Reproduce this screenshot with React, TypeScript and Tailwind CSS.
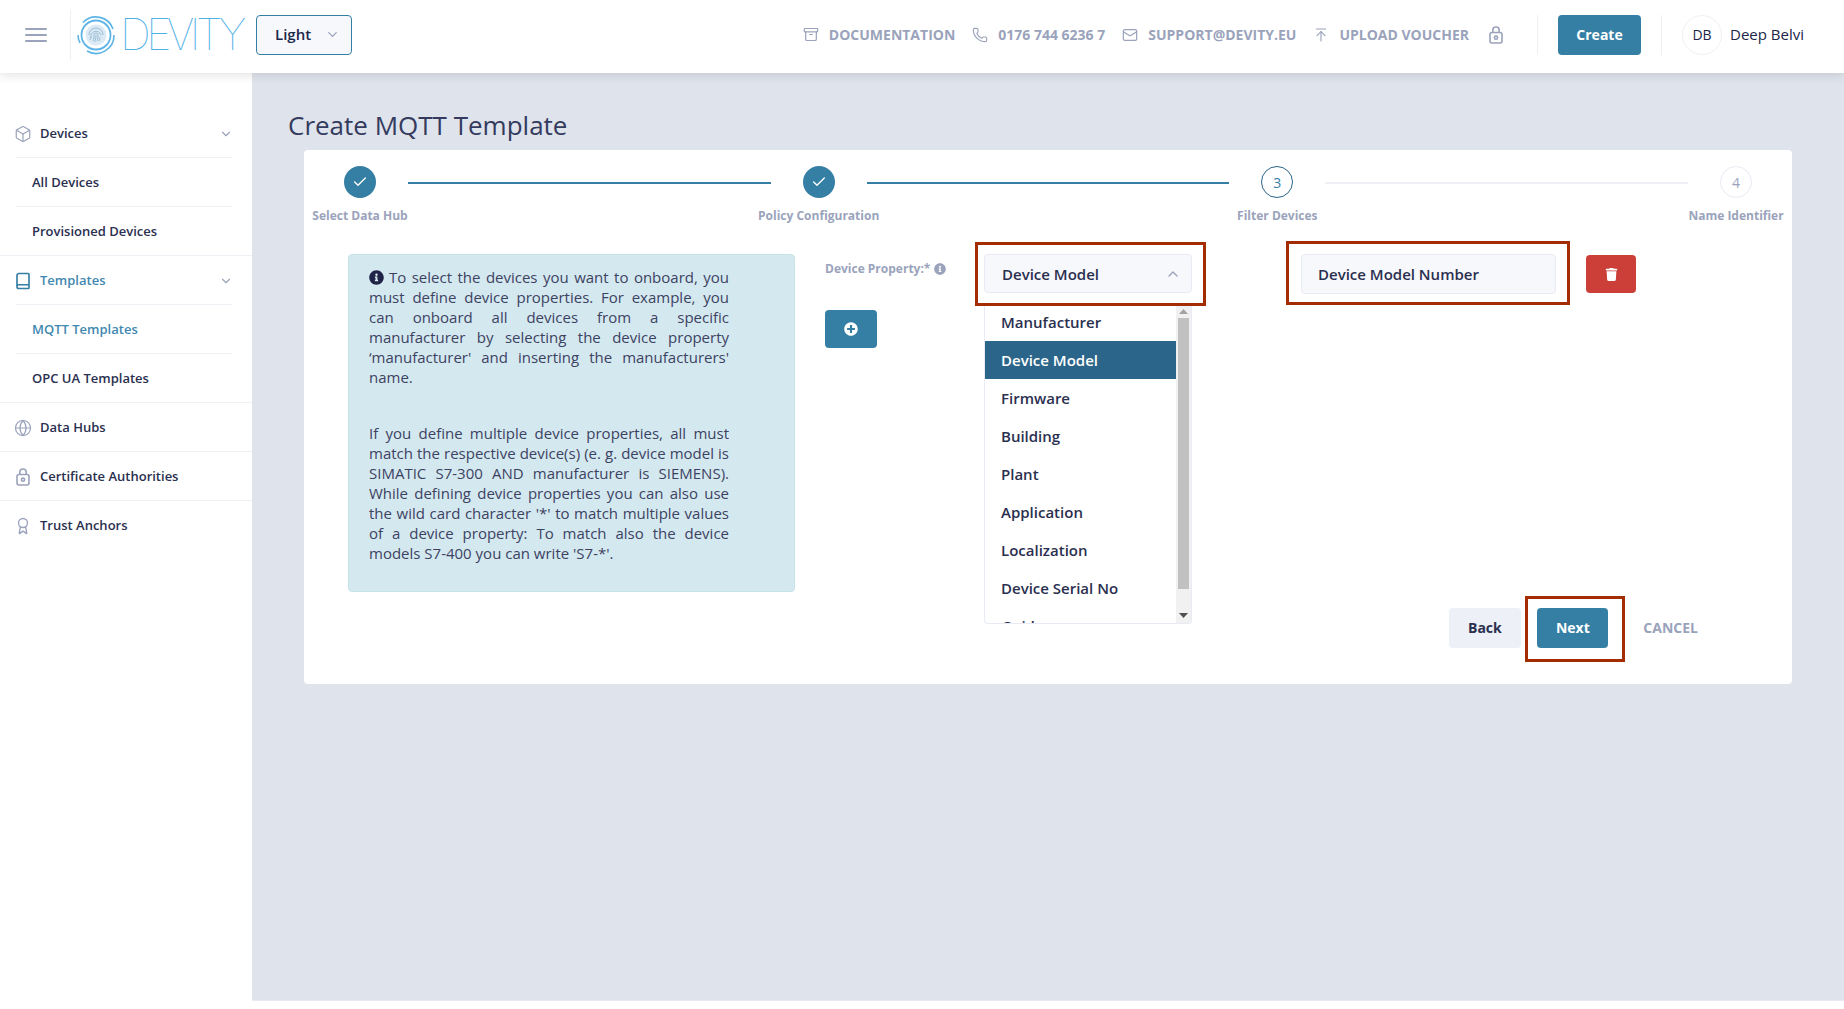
import React from "react";
import { Archive, ArrowUpToLine, Award, Book, Box, Check, ChevronDown, ChevronUp, Globe, Mail, Phone } from "lucide-react";
import { FaInfoCircle, FaPlusCircle, FaTrash } from "react-icons/fa";

function PadLock({ className }: { className?: string }) {
  return (
    <svg width="14" height="18" viewBox="0 0 14 18" fill="none" stroke="currentColor" strokeWidth="1.6" className={className}>
      <rect x="1" y="6.500" width="12" height="10.500" rx="2" />
      <circle cx="7" cy="11.700" r="1.600" />
      <path d="M3.800 6.500V4.200a3.200 3.200 0 0 1 6.400 0v2.300" />
    </svg>
  );
}

function Logo() {
  return (
    <div className="flex items-center ml-[5px] w-[172px] h-[50px]">
      <svg width="40" height="40" viewBox="0 0 40 40" fill="none" className="shrink-0">
        <path d="M7 7.500A18 18 0 0 1 37 14" stroke="#5eb4e6" strokeWidth="1.6" />
        <path d="M38 20A18 18 0 0 1 11 36" stroke="#5eb4e6" strokeWidth="1.6" />
        <path d="M2 20A18 18 0 0 0 4 28" stroke="#5eb4e6" strokeWidth="1.6" />
        <circle cx="20" cy="20" r="14.5" stroke="#5eb4e6" strokeWidth="1.8" />
        <circle cx="20" cy="20" r="10.5" fill="#dbeaf4" />
        <path d="M13 20a7 7 0 0 1 14 0M15 23a5 5 0 0 1 10-3M17 26c1-2 1-4 1-6a2 2 0 0 1 4 0c0 2 0 4-1 6M20 20c0 3-.5 5-1.500 7M24 22c0 2-.5 3-1 4M14 25c.5-1 1-2 1-3" stroke="#8fb7cf" strokeWidth="0.9" />
      </svg>
      <span className="ml-[4px] font-['Inter',sans-serif] font-[120] text-[43px] leading-none tracking-[-4.500px] text-[#4fb0e8]">DEVITY</span>
    </div>
  );
}

function TopLink({ icon, text }: { icon: React.ReactNode; text: string }) {
  return (
    <div className="flex items-center">
      <span className="w-4 flex justify-center mr-[10px] text-[#9aa3bb]">{icon}</span>
      <span className="text-[14px] font-bold text-[#9aa3bb] whitespace-nowrap">{text}</span>
    </div>
  );
}

function Header() {
  return (
    <header className="relative z-10 h-[73px] pb-[4px] bg-white shadow-[0_2px_10px_rgba(0,0,0,0.12)] flex items-center">
      <div className="ml-[25px] w-[22px] flex flex-col gap-[4px]">
        <span className="h-[2px] bg-[#9aa3bb] rounded" />
        <span className="h-[2px] bg-[#9aa3bb] rounded" />
        <span className="h-[2px] bg-[#9aa3bb] rounded" />
      </div>
      <div className="ml-[23px] w-px h-[50px] bg-[#eef0f5]" />
      <Logo />
      <div className="ml-[8px] w-[96px] h-[40px] border border-[#367fa4] rounded bg-[#f7f8fc] flex items-center pl-[18px] pr-[11px] justify-between">
        <span className="text-[15px] font-semibold text-[#20264a]">Light</span>
        <ChevronDown size={15} className="text-[#9aa3bb]" />
      </div>
      <div className="ml-auto flex items-center pr-[40px]">
        <div className="flex items-center gap-[17px]">
          <TopLink icon={<Archive size={17} strokeWidth={1.8} />} text="DOCUMENTATION" />
          <TopLink icon={<Phone size={18} strokeWidth={1.7} />} text="0176 744 6236 7" />
          <TopLink icon={<Mail size={18} strokeWidth={1.8} />} text="SUPPORT@DEVITY.EU" />
          <TopLink icon={<ArrowUpToLine size={18} strokeWidth={1.7} />} text="UPLOAD VOUCHER" />
          <PadLock className="ml-[3px] text-[#9aa3bb]" />
        </div>
        <div className="ml-[34px] w-px h-[40px] bg-[#eef0f5]" />
        <button className="ml-[20px] w-[83px] h-[40px] rounded bg-[#367fa4] text-white text-[14px] font-bold">Create</button>
        <div className="ml-[20px] w-px h-[40px] bg-[#eef0f5]" />
        <div className="ml-[20px] w-[40px] h-[40px] rounded-full border border-[#eef0f5] flex items-center justify-center text-[14px] text-[#20264a]">DB</div>
        <span className="ml-[8px] text-[15px] text-[#20264a] whitespace-nowrap">Deep Belvi</span>
      </div>
    </header>
  );
}

function SideRow({ icon, text, chevron, active, last, sub }: { icon?: React.ReactNode; text: string; chevron?: boolean; active?: boolean; last?: boolean; sub?: boolean }) {
  return (
    <div className={`ml-4 mr-5 pt-px flex items-center ${last ? "h-[48px]" : "h-[49px] border-b border-[#eef0f5]"} ${sub ? "pl-4" : ""}`}>
      {icon && <span className={`-ml-[2px] w-[18px] mr-[8px] flex justify-center ${active ? "text-[#367fa4]" : "text-[#9aa3bb]"}`}>{icon}</span>}
      <span className={`text-[13px] font-semibold whitespace-nowrap ${active ? "text-[#3f88b0]" : "text-[#2a2f4f]"}`}>{text}</span>
      {chevron && <ChevronDown size={14} className="ml-auto -mr-[1px] text-[#9aa3bb]" />}
    </div>
  );
}

function Sidebar() {
  return (
    <aside className="w-[252px] shrink-0 pt-[36px] bg-white">
      <div className="border-b border-[#eef0f5]">
        <SideRow icon={<Box size={18} strokeWidth={1.6} />} text="Devices" chevron />
        <SideRow sub text="All Devices" />
        <SideRow sub text="Provisioned Devices" last />
      </div>
      <div className="border-b border-[#eef0f5]">
        <SideRow active icon={<Book size={18} strokeWidth={2.2} />} text="Templates" chevron />
        <SideRow sub active text="MQTT Templates" />
        <SideRow sub text="OPC UA Templates" last />
      </div>
      <div className="border-b border-[#eef0f5]">
        <SideRow icon={<Globe size={18} strokeWidth={1.6} />} text="Data Hubs" last />
      </div>
      <div className="border-b border-[#eef0f5]">
        <SideRow icon={<PadLock />} text="Certificate Authorities" last />
      </div>
      <SideRow icon={<Award size={18} strokeWidth={1.8} />} text="Trust Anchors" last />
    </aside>
  );
}

function Step({ n, label, state }: { n: number; label: string; state: "done" | "current" | "todo" }) {
  return (
    <div className="w-24 shrink-0 flex flex-col items-center">
      {state === "done" ? (
        <div className="w-8 h-8 rounded-full bg-[#367fa4] flex items-center justify-center text-white">
          <Check size={16} strokeWidth={2} />
        </div>
      ) : (
        <div className={`w-8 h-8 rounded-full border flex items-center justify-center text-[14px] ${state === "current" ? "border-[#2b6589] text-[#367fa4]" : "border-[#e8ebf3] text-[#9aa3bb]"}`}>{n}</div>
      )}
      <span className="mt-[10px] text-[12px] leading-4 font-bold text-[#9aa3bb] whitespace-nowrap">{label}</span>
    </div>
  );
}

function Stepper() {
  return (
    <div className="flex items-start h-[58px]">
      <Step n={1} label="Select Data Hub" state="done" />
      <div className="flex-1 mt-4 h-0.5 bg-[#367fa4]" />
      <Step n={2} label="Policy Configuration" state="done" />
      <div className="flex-1 mt-4 h-0.5 bg-[#367fa4]" />
      <Step n={3} label="Filter Devices" state="current" />
      <div className="flex-1 mt-4 h-0.5 bg-[#eef0f5]" />
      <Step n={4} label="Name Identifier" state="todo" />
    </div>
  );
}

function InfoBox() {
  return (
    <div className="ml-9 w-[447px] h-[338px] shrink-0 rounded border border-[#c7e3ea] bg-[#d4e9ef] pl-[20px] pr-[65px] pt-[12px] text-[15px] leading-5 text-[#3d4263] text-justify">
      <p className="mb-9">
        <FaInfoCircle className="inline-block align-[-2px] mr-[5px] text-[#1f2347]" size={15} />
        To select the devices you want to onboard, you must define device properties. For example, you can onboard all devices from a specific manufacturer by selecting the device property ‘manufacturer' and inserting the manufacturers' name.
      </p>
      <p>
        If you define multiple device properties, all must match the respective device(s) (e. g. device model is SIMATIC S7-300 AND manufacturer is SIEMENS). While defining device properties you can also use the wild card character '*' to match multiple values of a device property: To match also the device models S7-400 you can write 'S7-*'.
      </p>
    </div>
  );
}

const options = ["Manufacturer", "Device Model", "Firmware", "Building", "Plant", "Application", "Localization", "Device Serial No", "Guide"];

function Dropdown() {
  return (
    <div className="absolute left-[6px] top-[calc(100%+3px)] w-[208px] h-[318px] bg-white border-x border-b border-[#e8ebf3] rounded-b flex overflow-hidden">
      <div className="flex-1 -mt-[3px]">
        {options.map((o) => (
          <div key={o} className={`h-[38px] shrink-0 pl-4 flex items-center text-[15px] font-semibold ${o === "Device Model" ? "bg-[#2b6589] text-white" : "text-[#2a2f4f]"}`}>{o}</div>
        ))}
      </div>
      <div className="relative w-[15px] shrink-0 bg-[#f1f1f1] pt-[12px] px-[2px]">
        <svg width="9" height="5" viewBox="0 0 9 5" className="absolute left-[3px] top-[3px]"><path d="M4.500 0L9 5H0z" fill="#a3a3a3" /></svg>
        <div className="h-[271px] bg-[#c1c1c1]" />
        <svg width="9" height="5" viewBox="0 0 9 5" className="absolute left-[3px] bottom-[5px]"><path d="M0 0H9L4.500 5z" fill="#505050" /></svg>
      </div>
    </div>
  );
}

function PropertyForm() {
  return (
    <div className="flex items-start">
      <div className="ml-[30px] w-[150px] shrink-0">
        <div className="flex items-center h-[28px] pt-[2px]">
          <span className="text-[12px] font-bold text-[#9aa3bb] whitespace-nowrap">Device Property:*</span>
          <FaInfoCircle size={12} className="ml-[4px] text-[#9aa3bb]" />
        </div>
        <button className="mt-[28px] w-[52px] h-[38px] rounded bg-[#367fa4] text-white flex items-center justify-center">
          <FaPlusCircle size={14} />
        </button>
      </div>
      <div className="relative -mt-3 w-[231px] h-[64px] shrink-0 border-[3px] border-[#a32c00] pl-[6px] pt-[9px]">
        <div className="w-[208px] h-[39px] pt-px rounded border border-[#e8ebf3] bg-[#f7f8fc] flex items-center pl-[17px] pr-[10px] justify-between">
          <span className="text-[15px] font-semibold text-[#2a2f4f]">Device Model</span>
          <ChevronUp size={16} className="text-[#9aa3bb]" />
        </div>
        <Dropdown />
      </div>
      <div className="ml-[80px] -mt-[13px] w-[284px] h-[64px] shrink-0 border-[3px] border-[#a32c00] pl-3 pt-[10px]">
        <div className="w-[255px] h-[40px] rounded border border-[#e8ebf3] bg-[#f7f8fc] flex items-center pl-[16px] text-[15px] font-semibold text-[#2a2f4f]">Device Model Number</div>
      </div>
      <button className="ml-[16px] mt-px w-[50px] h-[38px] rounded bg-[#cb3f38] text-white flex items-center justify-center">
        <FaTrash size={13} />
      </button>
    </div>
  );
}

function Footer() {
  return (
    <div className="mt-1 flex justify-end items-start pr-[86px]">
      <button className="mt-3 w-[72px] h-[40px] pb-px pr-px rounded bg-[#edf0f6] text-[14px] font-bold text-[#2a2f4f]">Back</button>
      <div className="ml-1 w-[100px] h-[66px] border-[3px] border-[#a32c00] pl-[9px] pt-[9px]">
        <button className="w-[71px] h-[40px] pb-px rounded bg-[#367fa4] text-[14px] font-bold text-white">Next</button>
      </div>
      <span className="ml-[18px] mt-3 h-[40px] leading-10 text-[14px] font-bold text-[#9aa3bb]">CANCEL</span>
    </div>
  );
}

export default function App() {
  return (
    <div className="w-full h-[1009px] overflow-hidden bg-white font-['Open_Sans',sans-serif]">
      <Header />
      <div className="flex h-[928px]">
        <Sidebar />
        <main className="flex-1 bg-[#dfe3eb] border-b border-[#e8ebf5] px-[52px] pt-[35px]">
          <h1 className="-ml-4 text-[26px] leading-[34px] text-[#343b5e]">Create MQTT Template</h1>
          <div className="mt-2 h-[534px] rounded bg-white px-2 pt-4">
            <Stepper />
            <div className="mt-[30px] flex items-start">
              <InfoBox />
              <PropertyForm />
            </div>
            <Footer />
          </div>
        </main>
      </div>
    </div>
  );
}
